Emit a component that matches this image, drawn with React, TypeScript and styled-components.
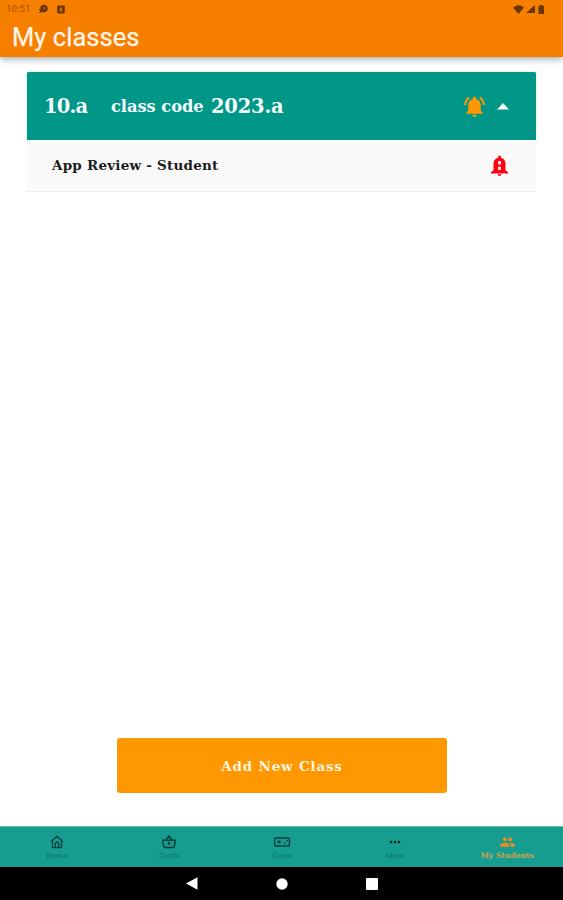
import React from "react";
import styled, { createGlobalStyle } from "styled-components";
import { MdNotificationsActive, MdPeople, MdMoreHoriz } from "react-icons/md";

const GlobalStyle = createGlobalStyle`
  * { box-sizing: border-box; }
  body { margin: 0; background: #fff; }
`;

const Screen = styled.div`
  height: 100vh;
  display: flex;
  flex-direction: column;
  font-family: "DejaVu Serif", serif;
  overflow: hidden;
`;

const Header = styled.header`
  height: 57px;
  flex: none;
  background: #f77f00;
  box-shadow: 0 2px 7px rgba(0, 0, 0, 0.36);
`;

const StatusBar = styled.div`
  height: 18px;
  display: flex;
  align-items: center;
  padding: 0 18px 0 6px;
  color: #693600;
  svg { display: block; }
`;

const Clock = styled.span`
  width: 32px;
  font: 9.5px/18px Roboto, sans-serif;
  letter-spacing: 0.2px;
  color: #a45400;
`;

const StatusIcons = styled.div<{ $end?: boolean }>`
  display: flex;
  align-items: center;
  gap: ${(p) => (p.$end ? 2 : 8)}px;
  margin-left: ${(p) => (p.$end ? "auto" : "0")};
`;

const Title = styled.h1`
  margin: 0;
  padding-left: 12px;
  font: 400 25.5px/39px Roboto, sans-serif;
  letter-spacing: 0.05px;
  color: #fff4e8;
  -webkit-text-stroke: 0.25px #fff4e8;
`;

const Main = styled.main`
  flex: 1;
  display: flex;
  flex-direction: column;
  padding: 15px 27px 33px;
`;

const ClassHeader = styled.div`
  height: 68px;
  flex: none;
  display: flex;
  align-items: center;
  padding: 1px 27px 0 17px;
  border-radius: 2px 2px 0 0;
  background: #009688;
  box-shadow: 0 0 1px rgba(0, 100, 90, 0.8);
`;

const Label = styled.span<{ $size: number; $width: number; $spacing?: number }>`
  width: ${(p) => p.$width}px;
  flex: none;
  white-space: nowrap;
  font-size: ${(p) => p.$size}px;
  font-weight: 700;
  line-height: 24px;
  letter-spacing: ${(p) => p.$spacing ?? 0}px;
  color: #f2fbf9;
`;

const Actions = styled.div`
  display: flex;
  align-items: center;
  gap: 10px;
  margin-left: auto;
  color: #ff9800;
  svg { display: block; }
`;

const StudentRow = styled.div`
  height: 52px;
  flex: none;
  display: flex;
  align-items: center;
  justify-content: space-between;
  padding: 0 27px 0 25px;
  background: #fafafa;
  border-bottom: 1px solid #ededed;
  color: #ff0010;
`;

const StudentName = styled.span`
  font-size: 13.5px;
  font-weight: 700;
  letter-spacing: 0.23px;
  line-height: 18px;
  padding-bottom: 1px;
  white-space: nowrap;
  color: #1c1c1c;
`;

const AddButton = styled.button`
  width: 330px;
  height: 55px;
  margin: auto 0 0 90px;
  padding: 0;
  border: 0;
  border-radius: 3px;
  background: #ff9800;
  color: #fff3df;
  font: 700 13.5px "DejaVu Serif", serif;
  letter-spacing: 0.8px;
`;

const Tabs = styled.nav`
  height: 41px;
  flex: none;
  display: grid;
  grid-template-columns: repeat(5, 1fr);
  border-top: 1px solid #65bdb2;
  background: #169d90;
`;

const Tab = styled.div<{ $active?: boolean }>`
  display: flex;
  flex-direction: column;
  align-items: center;
  padding: 7px 0 0 1px;
  color: ${(p) => (p.$active ? "#ec8b20" : "#053f39")};
  svg { display: block; height: 16px; }
`;

const TabLabel = styled.span<{ $active?: boolean }>`
  margin-top: 1px;
  font-size: ${(p) => (p.$active ? 7.6 : 7)}px;
  font-weight: ${(p) => (p.$active ? 700 : 400)};
  line-height: 10px;
  white-space: nowrap;
  color: ${(p) => (p.$active ? "#cba451" : "#087267")};
`;

const SystemBar = styled.footer`
  height: 33px;
  flex: none;
  display: flex;
  justify-content: center;
  align-items: center;
  gap: 78px;
  background: #000;
  color: #fff;
  svg { display: block; }
`;

const AlertBell = () => (
  <svg width="19" height="22" viewBox="0 0 19 22" fill="currentColor">
    <path
      fillRule="evenodd"
      d="M8.2.8h2.6v2c3 .7 4.7 2.8 4.7 6v6.4l2.5 2v1.3H1v-1.3l2.5-2V8.800c0-3.200 1.700-5.300 4.700-6zM8.200 6v3.600h2.600V6zM8.200 11.800v3.200h2.600v-3.200z"
    />
    <path d="M7.500 19.300h4a2 1.700 0 0 1-4 0" />
  </svg>
);

const HomeIcon = () => (
  <svg width="16" height="16" viewBox="0 0 16 16" fill="none" stroke="currentColor" strokeWidth="1.3" strokeLinejoin="round">
    <path d="M2.2 7.600 8 2.200l5.800 5.400M3.500 6.600v7h9v-7M6.300 13.500V9.300L8 7.800l1.700 1.500v4.200" />
  </svg>
);

const BasketIcon = () => (
  <svg width="16" height="16" viewBox="0 0 16 16" fill="none" stroke="currentColor" strokeWidth="1.4" strokeLinejoin="round">
    <path d="M1.200 6.200h13.600M2 6.200v3.500l1.200 3.800h9.600L14 9.700V6.200M4.800 6 8 2l3.200 4" />
    <circle cx="8" cy="9.400" r="1.400" fill="currentColor" stroke="none" />
  </svg>
);

const GameIcon = () => (
  <svg width="18" height="16" viewBox="0 0 18 16" fill="none" stroke="currentColor" strokeWidth="1.4">
    <rect x="1.600" y="4" width="14.800" height="8" rx="1" />
    <path d="M4 8h4M6 6.500v3M10.500 9.200h1.700M13 6.800h1.700" />
  </svg>
);

const tabs = [
  { label: "Home", icon: <HomeIcon /> },
  { label: "Cards", icon: <BasketIcon /> },
  { label: "Game", icon: <GameIcon /> },
  { label: "More", icon: <MdMoreHoriz size={18} color="#06201d" /> },
  { label: "My Students", icon: <MdPeople size={17} />, active: true },
];

export default function App() {
  return (
    <Screen>
      <GlobalStyle />
      <Header>
        <StatusBar>
          <Clock>10:51</Clock>
          <StatusIcons>
            <svg width="11" height="10" viewBox="0 0 11 10" fill="currentColor">
              <path d="M6 .8A3.8 3.8 0 1 1 4.3 8L1 9l1.2-2.3L.6 5.5l1.7-.8A3.8 3.8 0 0 1 6 .8" />
              <circle cx="6.2" cy="4.2" r="1" fill="#c96600" />
            </svg>
            <svg width="8" height="9" viewBox="0 0 8 9" fill="currentColor">
              <path fillRule="evenodd" d="M1 .5h6v8H1zM2.5 6.8h.8l.3-1h1l.3 1h.8L4.4 2.2h-.8z" />
              <path d="M.2 1h7.6v7H6.5V2h-5v6H.2z" />
            </svg>
          </StatusIcons>
          <StatusIcons $end>
            <svg width="11" height="9" viewBox="0 0 11 9" fill="currentColor"><path d="M0 2.5Q5.5-1.8 11 2.5L5.5 9z" /></svg>
            <svg width="9" height="8" viewBox="0 0 9 8" fill="currentColor"><path d="M9 0v8H0z" /></svg>
            <svg width="8" height="9" viewBox="1 0 8 9" fill="currentColor"><path d="M3.500 0h3v1H8v8H2.500V1h1z" /></svg>
          </StatusIcons>
        </StatusBar>
        <Title>My classes</Title>
      </Header>
      <Main>
        <ClassHeader>
          <Label $size={19.5} $width={67} $spacing={-0.8}>10.a</Label>
          <Label $size={16.3} $width={100} $spacing={-0.05}>class code</Label>
          <Label $size={19.5} $width={80} $spacing={-0.2}>2023.a</Label>
          <Actions>
            <MdNotificationsActive size={25} />
            <svg width="12" height="7" viewBox="0 0 12 7" fill="#fff"><path d="M6 0 12 6.500H0z" /></svg>
          </Actions>
        </ClassHeader>
        <StudentRow>
          <StudentName>App Review - Student</StudentName>
          <AlertBell />
        </StudentRow>
        <AddButton>Add New Class</AddButton>
      </Main>
      <Tabs>
        {tabs.map((tab) => (
          <Tab key={tab.label} $active={tab.active}>
            {tab.icon}
            <TabLabel $active={tab.active}>{tab.label}</TabLabel>
          </Tab>
        ))}
      </Tabs>
      <SystemBar>
        <svg width="12" height="13" viewBox="0 0 12 13" fill="currentColor"><path d="M0 6.500 11.500.3v12.400z" /></svg>
        <svg width="12" height="12" viewBox="0 0 12 12" fill="currentColor"><circle cx="6" cy="6" r="5.700" /></svg>
        <svg width="12" height="12" viewBox="0 0 12 12" fill="currentColor"><rect width="12" height="12" rx="1" /></svg>
      </SystemBar>
    </Screen>
  );
}
